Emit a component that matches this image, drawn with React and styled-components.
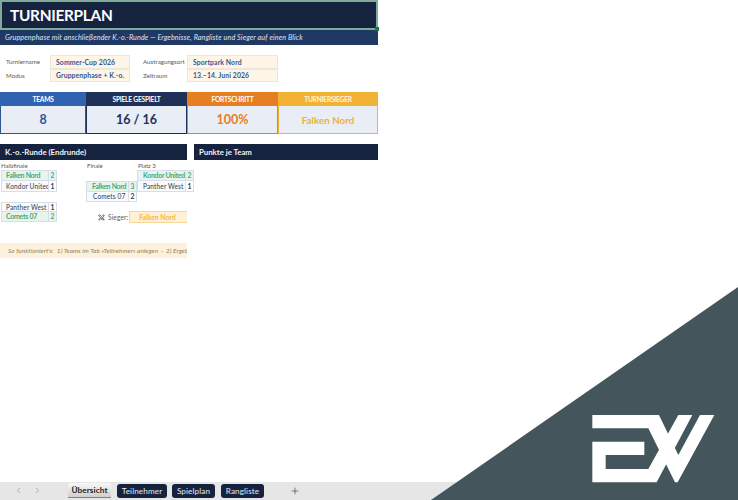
import React from "react";
import styled, { createGlobalStyle } from "styled-components";
import { ChevronLeft, ChevronRight, Plus, Swords } from "lucide-react";

const Global = createGlobalStyle`
  html, body { margin: 0; padding: 0; background: #fff; }
  body { font-family: Lato, "Liberation Sans", sans-serif; }
`;

const Page = styled.div`
  position: relative;
  width: 738px;
  height: 500px;
  overflow: hidden;
  display: flex;
  flex-direction: column;
`;

const Sheet = styled.main`
  flex: 1;
  width: 378px;
  display: flex;
  flex-direction: column;
`;

const Title = styled.h1`
  position: relative;
  box-sizing: border-box;
  margin: 0;
  height: 30px;
  padding: 0 0 0 8px;
  display: flex;
  align-items: center;
  background: #16233f;
  border: 2px solid #7fa998;
  color: #fff;
  font-size: 15.4px;
  font-weight: 700;
  letter-spacing: -0.3px;
`;

const Handle = styled.i`
  position: absolute;
  right: -3px;
  bottom: -3px;
  width: 4px;
  height: 4px;
  background: #217346;
`;

const Subtitle = styled.div`
  height: 15px;
  padding-left: 5px;
  display: flex;
  align-items: center;
  background: #1f3864;
  color: #dfe6f2;
  font-size: 7.2px;
  font-style: italic;
  letter-spacing: 0.12px;
`;

const Info = styled.section`
  margin-top: 10px;
  display: grid;
  grid-template-columns: 50px 80px 57px 91px;
  grid-auto-rows: 13.5px;
`;

const InfoLabel = styled.div`
  padding-left: ${p => p.$pad}px;
  display: flex;
  align-items: center;
  white-space: nowrap;
  color: #595959;
  font-size: 6.2px;
`;

const InfoValue = styled.div`
  box-sizing: border-box;
  padding-left: 5px;
  display: flex;
  align-items: center;
  white-space: nowrap;
  background: #fff5e6;
  border: 1px solid #ebe7df;
  color: #2f5597;
  font-size: 6.85px;
  font-weight: 700;
  letter-spacing: 0.1px;
`;

const Kpis = styled.section`
  margin-top: 10px;
  display: grid;
  grid-template-columns: 86px 101px 91px 100px;
`;

const Kpi = styled.div`
  display: flex;
  flex-direction: column;
`;

const KpiHead = styled.div`
  height: 14px;
  display: flex;
  align-items: center;
  justify-content: center;
  background: ${p => p.$c};
  color: ${p => p.$t || "#fff"};
  font-size: 6.7px;
  font-weight: 700;
  letter-spacing: -0.25px;
`;

const KpiValue = styled.div`
  box-sizing: border-box;
  height: 28px;
  display: flex;
  align-items: center;
  justify-content: center;
  background: #e8edf6;
  border: 1px solid ${p => p.$c};
  border-top: 0;
  color: ${p => p.$c};
  font-size: ${p => p.$size || 12.5}px;
  font-weight: 700;
`;

const Sections = styled.section`
  margin-top: 10px;
  display: grid;
  grid-template-columns: 187px 184px;
  column-gap: 7px;
`;

const SectionHead = styled.h2`
  margin: 0;
  height: 16px;
  padding-left: 5px;
  display: flex;
  align-items: center;
  background: #16233f;
  color: #f0f2f6;
  font-size: 7.8px;
  font-weight: 700;
`;

const Bracket = styled.section`
  display: grid;
  grid-template-columns: 1px 56px 29px 51px 57px;
  grid-template-rows: 10px 11px 11px 10px 10px 10px;
  width: 194px;
`;

const RoundLabel = styled.div`
  grid-column: ${p => p.$col};
  grid-row: 1;
  padding-left: ${p => p.$pad || 0}px;
  display: flex;
  align-items: center;
  color: #595959;
  font-size: 6px;
`;

const Match = styled.div`
  grid-column: ${p => p.$col};
  grid-row: ${p => p.$row};
  display: grid;
  grid-template-rows: 1fr 1fr;
  min-height: 0;
`;

const Team = styled.div`
  box-sizing: border-box;
  display: grid;
  grid-template-columns: minmax(0, 1fr) 8px;
  border: 1px solid #d5deea;
  border-top-width: ${p => (p.$second ? 0 : 1)}px;
  background: ${p => (p.$win ? "#e8f5ee" : "#f8fafd")};
  color: ${p => (p.$win ? "#4ba874" : "#333b4a")};
  font-weight: ${p => (p.$win ? 700 : 400)};
  font-size: ${p => (p.$win ? 7 : 6.6)}px;
  letter-spacing: ${p => (p.$win ? -0.3 : 0.1)}px;
  min-height: 0;
  overflow: hidden;
`;

const TeamName = styled.span`
  padding-left: ${p => p.$pad}px;
  display: flex;
  align-items: center;
  white-space: nowrap;
  overflow: hidden;
  line-height: 1;
`;

const TeamScore = styled.span`
  display: flex;
  align-items: center;
  justify-content: center;
  background: ${p => (p.$win ? "#e8f5ee" : "#fff")};
  border-left: 1px solid #d5deea;
  font-weight: 700;
  font-size: 6.8px;
  line-height: 1;
  letter-spacing: 0;
`;

const Winner = styled.div`
  grid-column: 4 / 6;
  grid-row: 6;
  width: 101px;
  padding-left: 12px;
  box-sizing: border-box;
  display: flex;
  align-items: center;
  white-space: nowrap;
  color: #555c68;
  font-size: 6.6px;
  letter-spacing: 0.1px;
`;

const WinnerIcon = styled.span`
  display: flex;
  margin-right: 3px;
  color: #333b4a;
`;

const WinnerBox = styled.div`
  box-sizing: border-box;
  margin-left: 1px;
  flex: 1;
  height: 12px;
  padding-left: 9px;
  display: flex;
  align-items: center;
  background: #fff0d6;
  border: 1px solid #f6d69a;
  border-right: 0;
  color: #f3b948;
  font-size: 7px;
  font-weight: 700;
  letter-spacing: -0.1px;
`;

const Hint = styled.div`
  margin-top: 21px;
  width: 179px;
  height: 15px;
  padding-left: 8px;
  display: flex;
  align-items: center;
  overflow: hidden;
  white-space: pre;
  background: #fdf1dc;
  color: #8b7f62;
  font-size: 6.35px;
  font-style: italic;
  letter-spacing: 0.08px;
`;

const TabBar = styled.nav`
  height: 18px;
  padding-top: 1px;
  box-sizing: border-box;
  background: #e6e6e6;
  display: flex;
  align-items: flex-start;
  font-size: 8.2px;
`;

const Nav = styled.span`
  width: ${p => p.$w}px;
  height: 15px;
  margin-left: ${p => p.$ml}px;
  display: flex;
  align-items: center;
  justify-content: center;
  color: #9b9b9b;
`;

const Tab = styled.span`
  box-sizing: border-box;
  width: ${p => p.$w}px;
  height: 14px;
  margin: 1px 0 0 ${p => p.$ml}px;
  display: flex;
  align-items: center;
  justify-content: center;
  background: #16233f;
  border-radius: 3px;
  color: #e4e8ef;
  letter-spacing: 0.1px;
`;

const ActiveTab = styled.span`
  box-sizing: border-box;
  width: 43px;
  height: 15px;
  margin-left: 26px;
  display: flex;
  align-items: center;
  justify-content: center;
  background: linear-gradient(#f8f8f8, #cfcfcf);
  border-radius: 2px 2px 0 0;
  border-bottom: 1px solid #4f9b78;
  color: #222;
  font-weight: 700;
  letter-spacing: 0.1px;
`;

const Corner = styled.svg`
  position: absolute;
  left: 0;
  top: 0;
  pointer-events: none;
`;

const matches = [
  { col: "2", row: "2 / 4", teams: [["Falken Nord", 2, true, 4], ["Kondor United", 1, false, 4]] },
  { col: "2", row: "5 / 7", teams: [["Panther West", 1, false, 4], ["Comets 07", 2, true, 4]] },
  { col: "4", row: "3 / 5", teams: [["Falken Nord", 3, true, 5], ["Comets 07", 2, false, 6]] },
  { col: "5", row: "2 / 4", teams: [["Kondor United", 2, true, 5], ["Panther West", 1, false, 5]] }
];

export default function App() {
  return (
    <Page>
      <Global />
      <Sheet>
        <Title>TURNIERPLAN<Handle /></Title>
        <Subtitle>Gruppenphase mit anschließender K.-o.-Runde — Ergebnisse, Rangliste und Sieger auf einen Blick</Subtitle>
        <Info>
          <InfoLabel $pad={6}>Turniername</InfoLabel>
          <InfoValue>Sommer-Cup 2026</InfoValue>
          <InfoLabel $pad={13}>Austragungsort</InfoLabel>
          <InfoValue>Sportpark Nord</InfoValue>
          <InfoLabel $pad={6}>Modus</InfoLabel>
          <InfoValue>Gruppenphase + K.-o.</InfoValue>
          <InfoLabel $pad={13}>Zeitraum</InfoLabel>
          <InfoValue>13.–14. Juni 2026</InfoValue>
        </Info>
        <Kpis>
          <Kpi><KpiHead $c="#2f62b0">TEAMS</KpiHead><KpiValue $c="#2f5597">8</KpiValue></Kpi>
          <Kpi><KpiHead $c="#1f3059">SPIELE GESPIELT</KpiHead><KpiValue $c="#1f3059">16 / 16</KpiValue></Kpi>
          <Kpi><KpiHead $c="#e67e22">FORTSCHRITT</KpiHead><KpiValue $c="#e67e22">100%</KpiValue></Kpi>
          <Kpi><KpiHead $c="#f2b233" $t="#fff4dc">TURNIERSIEGER</KpiHead><KpiValue $c="#f2b233" $size={9.8}>Falken Nord</KpiValue></Kpi>
        </Kpis>
        <Sections>
          <SectionHead>K.-o.-Runde (Endrunde)</SectionHead>
          <SectionHead>Punkte je Team</SectionHead>
        </Sections>
        <Bracket>
          <RoundLabel $col="2">Halbfinale</RoundLabel>
          <RoundLabel $col="4" $pad={1}>Finale</RoundLabel>
          <RoundLabel $col="5" $pad={1}>Platz 3</RoundLabel>
          {matches.map((m, i) => (
            <Match key={i} $col={m.col} $row={m.row}>
              {m.teams.map(([name, score, win, pad], j) => (
                <Team key={name} $win={win} $second={j === 1}>
                  <TeamName $pad={pad}>{name}</TeamName>
                  <TeamScore $win={win}>{score}</TeamScore>
                </Team>
              ))}
            </Match>
          ))}
          <Winner>
            <WinnerIcon><Swords size={7} strokeWidth={2.4} /></WinnerIcon>
            Sieger:
            <WinnerBox>Falken Nord</WinnerBox>
          </Winner>
        </Bracket>
        <Hint>{"So funktioniert's:  1) Teams im Tab »Teilnehmer« anlegen  ·  2) Ergebnisse im Spielplan eintragen"}</Hint>
      </Sheet>
      <TabBar>
        <Nav $w={10} $ml={13}><ChevronLeft size={9} /></Nav>
        <Nav $w={10} $ml={9}><ChevronRight size={9} /></Nav>
        <ActiveTab>Übersicht</ActiveTab>
        <Tab $w={50} $ml={6}>Teilnehmer</Tab>
        <Tab $w={43} $ml={5}>Spielplan</Tab>
        <Tab $w={43} $ml={6}>Rangliste</Tab>
        <Nav $w={10} $ml={26}><Plus size={10} color="#666" /></Nav>
      </TabBar>
      <Corner width="738" height="500" viewBox="0 0 738 500">
        <polygon points="738,287 738,500 431,500" fill="#44565c" />
        <g transform="translate(585 405) scale(0.3333)" fill="#fff">
          <polygon points="22,30 222,30 280,150 345,30 388,30 278,232 270,232 190,70 22,70" />
          <polygon points="22,110 178,110 178,150 62,150 62,192 190,192 280,30 322,30 215,232 22,232" />
        </g>
      </Corner>
    </Page>
  );
}
